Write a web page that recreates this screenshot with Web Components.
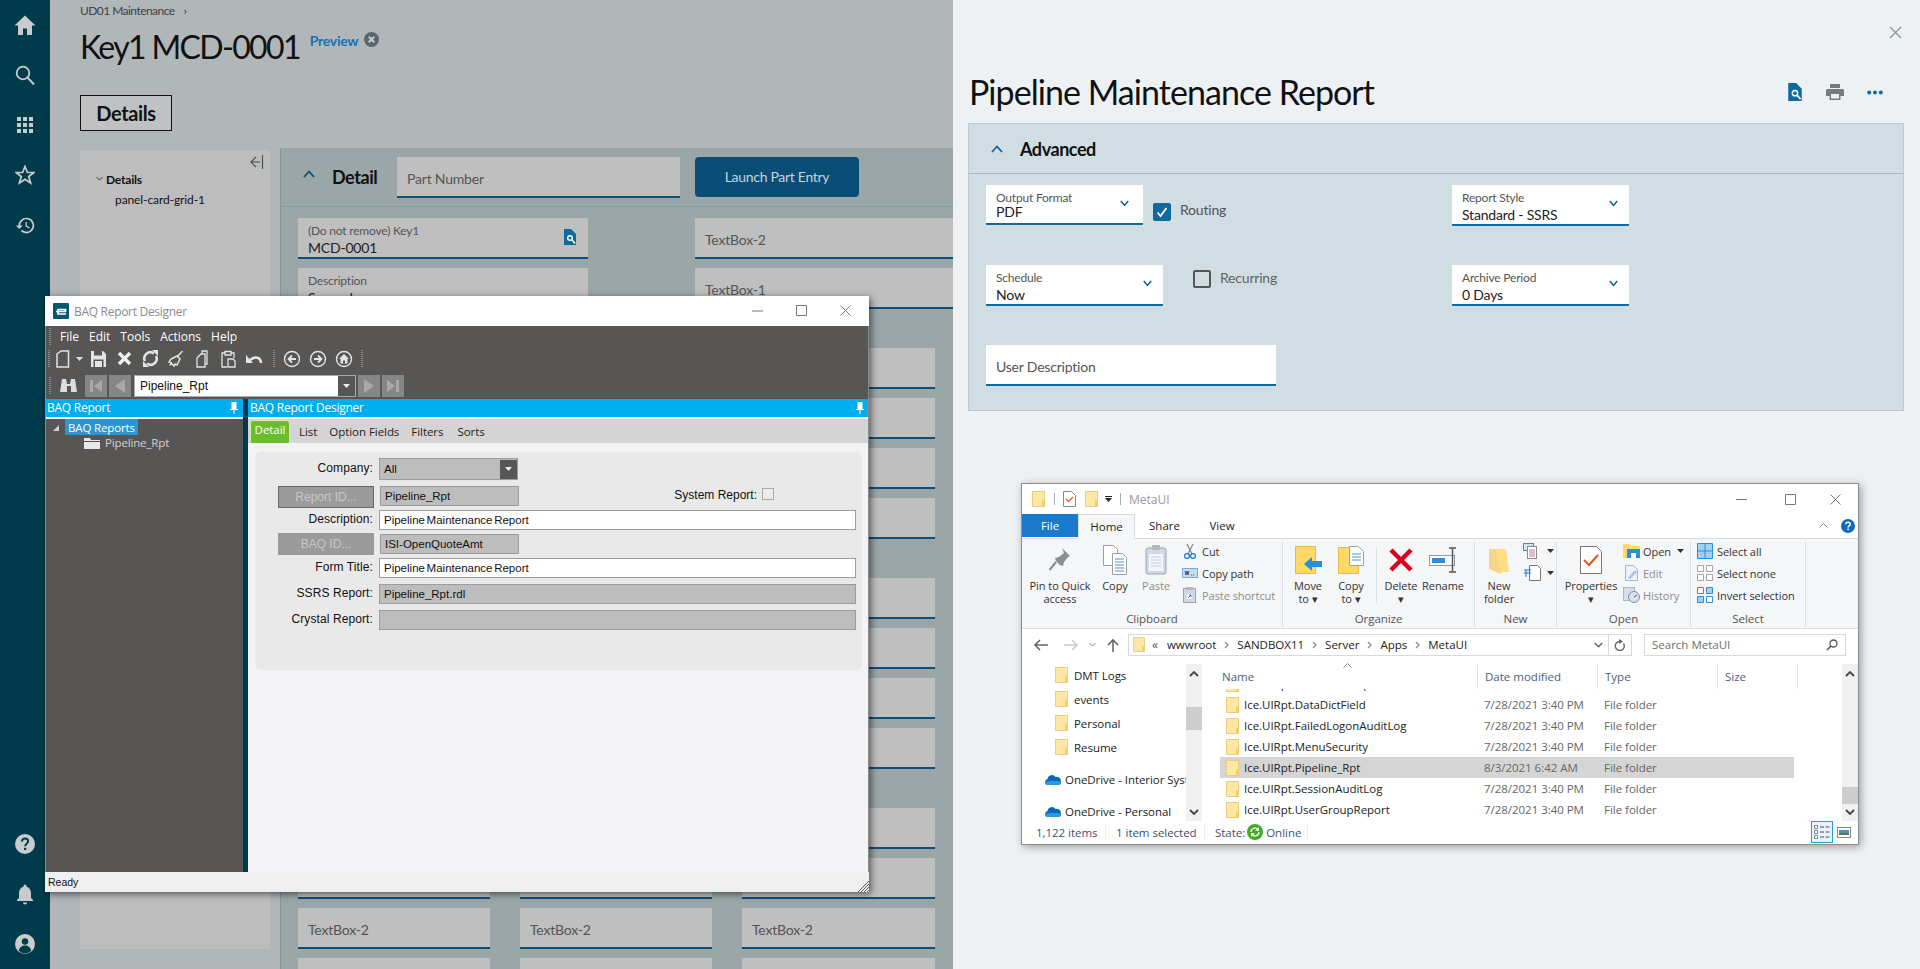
<![CDATA[<!DOCTYPE html>
<html><head><meta charset="utf-8"><title>Report</title>
<style>
html,body{margin:0;padding:0;height:969px;overflow:hidden;background:#edf1f4;font-family:"Lato","Liberation Sans",sans-serif}
</style></head><body>
<app-desktop></app-desktop>
<script>
const C=(name,css,html)=>customElements.define(name,class extends HTMLElement{
  connectedCallback(){ if(this.shadowRoot) return;
    const a=k=>this.getAttribute(k)||'';
    this.attachShadow({mode:'open'}).innerHTML='<style>'+css+'</style>'+(typeof html==='function'?html(a):html);
  }
});
const svg=(w,h,vb,body,extra='')=>`<svg width="${w}" height="${h}" viewBox="${vb}" ${extra}>${body}</svg>`;
const docSearch=`<path d="M1 0h7l5 5v11H1z" fill="#0d6a9e"/><circle cx="7" cy="9" r="3" fill="#fff"/><circle cx="7" cy="9" r="1.6" fill="#0d6a9e"/><path d="M9 11l3 3.4" stroke="#fff" stroke-width="1.5"/>`;
const folder=(w=13,h=16)=>svg(w,h,'0 0 13 16',`<path d="M.5.5h12v15H.5z" fill="#ffe8a3" stroke="#e9cd7c"/><path d="M10 9.5h2.5v6H10z" fill="#f3cf63"/>`);

/* ---------- dimmed application behind the slide-out ---------- */
C('side-nav',`:host{display:flex;flex-direction:column;justify-content:space-between;width:50px;height:969px;background:#003b4b;flex:none}
 div{height:50px;display:flex;align-items:center;justify-content:center}svg{display:block}`,
`<section><div>${svg(24,24,'0 0 24 24','<path d="M12 2.5 1.5 12.5H5V22h5v-6.5h4V22h5v-9.5h3.5z" fill="#c8cccd"/>')}</div>
<div>${svg(22,22,'0 0 22 22','<circle cx="9" cy="9" r="6.3" fill="none" stroke="#c8cccd" stroke-width="1.8"/><path d="M13.6 13.6 20 20.5" stroke="#c8cccd" stroke-width="2"/>')}</div>
<div>${svg(16,16,'0 0 16 16','<path d="M0 0h4v4H0zM6 0h4v4H6zM12 0h4v4h-4zM0 6h4v4H0zM6 6h4v4H6zM12 6h4v4h-4zM0 12h4v4H0zM6 12h4v4H6zM12 12h4v4h-4z" fill="#c8cccd"/>')}</div>
<div>${svg(20,20,'0 0 20 20','<path d="M10 1.5l2.4 6h6.4l-5.1 4 1.9 6.5-5.6-3.8-5.6 3.8 1.9-6.5-5.1-4h6.4z" fill="none" stroke="#c8cccd" stroke-width="1.7"/>')}</div>
<div>${svg(21,21,'0 0 24 24','<path d="M13 3a9 9 0 0 0-9 9H1l3.9 3.9L9 12H6a7 7 0 1 1 2.05 4.95l-1.42 1.42A9 9 0 1 0 13 3zm-1 5v5l4.25 2.52.77-1.28L13.5 12.15V8z" fill="#c8cccd"/>')}</div></section>
<section><div>${svg(22,22,'0 0 22 22','<circle cx="11" cy="11" r="10" fill="#c8cccd"/><path d="M8 8.5C8 6.6 9.4 5.5 11.1 5.5s3 1.1 3 2.8c0 2.4-3 2.4-3 5" fill="none" stroke="#003b4b" stroke-width="2"/><rect x="10" y="14.8" width="2.2" height="2.2" fill="#003b4b"/>')}</div>
<div>${svg(20,22,'2 1 20 22','<path d="M12 22.5c1.1 0 2-.9 2-2h-4a2 2 0 0 0 2 2zm6-6.5v-5c0-3.07-1.63-5.64-4.5-6.32V4a1.5 1.5 0 0 0-3 0v.68C7.64 5.36 6 7.92 6 11v5l-2 2v1h16v-1z" fill="#c8cccd"/>')}</div>
<div>${svg(22,22,'0 0 22 22','<circle cx="11" cy="11" r="10" fill="#c8cccd"/><circle cx="11" cy="8.5" r="3.2" fill="#003b4b"/><path d="M4.8 17.5c.8-3.6 3.3-5 6.2-5s5.4 1.4 6.2 5c-1.7 1.7-3.9 3-6.2 3s-4.5-1.3-6.2-3z" fill="#003b4b"/>')}</div></section>`);

C('dim-field',`:host{display:block;height:41px;background:#bfbfbf;border-bottom:2px solid #0d4f78;box-sizing:border-box;padding-left:10px;position:relative;overflow:hidden}
 .l{font-size:12px;color:#555;position:absolute;top:5px;letter-spacing:-.2px}.v{font-size:14px;color:#222;position:absolute;top:21px;letter-spacing:-.2px}
 .p{font-size:14px;color:#555;line-height:44px;letter-spacing:-.2px}svg{position:absolute;right:11px;top:10px}`,
a=>a('label')?`<div class="l">${a('label')}</div><div class="v">${a('value')}</div>${a('icon')?svg(14,18,'0 0 14 16',docSearch):''}`:`<div class="p">${a('ph')}</div>`);

C('field-group',`:host{display:grid;grid-template-columns:192px 192px 193px;column-gap:30px;row-gap:9px;margin-top:39px}`,
 a=>{const p=a('rows');let h='';for(let i=0;i<12;i++){const r=Math.floor(i/3);h+=`<dim-field ph="${p&&p[r]==='t'?'TextBox-2':''}"></dim-field>`;}return h;});

C('back-page',`:host{display:block;width:903px;flex:none;height:969px;background:#b1b6b9;overflow:hidden}
 .head{padding-left:30px}
 .crumb{height:22px;line-height:22px;font-size:12px;color:#3c4246;letter-spacing:-.55px;display:flex;gap:9px}
 .title{display:flex;margin-top:5px;height:40px;align-items:flex-start}
 h1{margin:0;font-weight:400;font-size:32px;line-height:40px;color:#111;letter-spacing:-1.65px}
 .prev{font-size:14px;font-weight:700;color:#1672b0;margin:4px 0 0 10px;line-height:20px;letter-spacing:-.3px}
 .title svg{margin:5px 0 0 6px}
 .tabbtn{margin-top:28px;width:92px;height:36px;box-sizing:border-box;border:1.5px solid #111;background:#c0c1c2;font-size:20px;font-weight:700;color:#111;display:flex;align-items:center;justify-content:center;letter-spacing:-.4px}
 .row{display:flex;margin:17px 0 0 30px;gap:10px}
 nav{width:190px;height:799px;margin-top:2px;background:#bdbdbd;position:relative;font-size:12px;color:#111;box-sizing:border-box;padding-top:22px}
 nav .collapse{position:absolute;right:6px;top:5px}
 .t1{padding-left:26px;font-weight:700;height:16px;line-height:16px;letter-spacing:-.2px;position:relative}
 .t1 svg{position:absolute;left:16px;top:4px}
 .t2{padding-left:35px;margin-top:4px;line-height:16px;letter-spacing:-.1px}
 main{width:672px;background:#9aa6a7;border-left:1px solid #869596;height:821px;overflow:hidden}
 .bar{height:59px;box-sizing:border-box;border-bottom:1px solid #7fa0a5;display:flex;align-items:flex-start;padding-left:22px}
 .bar svg{margin-top:22px}
 .bar b{font-size:18px;font-weight:700;margin:17px 0 0 17px;width:65px;color:#111;letter-spacing:-.45px;line-height:24px}
 .bar dim-field{width:283px;margin-top:9px}
 .launch{margin:9px 0 0 15px;width:164px;height:40px;padding-bottom:2px;box-sizing:border-box;border-radius:4px;background:#0a4e78;color:#c6d3db;font-size:14px;display:flex;align-items:center;justify-content:center;letter-spacing:-.3px}
 .fields{padding:11px 0 0 17px}
 .top{display:grid;grid-template-columns:290px 290px;column-gap:107px;row-gap:9px}`,
`<div class="head"><div class="crumb"><span>UD01 Maintenance</span><span>›</span></div>
 <div class="title"><h1>Key1 MCD-0001</h1><span class="prev">Preview</span>${svg(15,15,'0 0 15 15','<circle cx="7.5" cy="7.5" r="7.5" fill="#57666d"/><path d="M4.8 4.8l5.4 5.4M10.2 4.8l-5.4 5.4" stroke="#c8cccd" stroke-width="2"/>')}</div>
 <div class="tabbtn">Details</div></div>
 <div class="row"><nav><span class="collapse">${svg(15,14,'0 0 15 14','<path d="M7 2 2 7l5 5M2 7h9M13.5 0v14" fill="none" stroke="#4a5256" stroke-width="1.2"/>')}</span>
  <div class="t1">${svg(7,6,'0 0 7 6','<path d="M.5 1l3 3 3-3" fill="none" stroke="#333"/>')}Details</div><div class="t2">panel-card-grid-1</div></nav>
 <main><div class="bar">${svg(12,8,'0 0 12 8','<path d="M1 7l5-5.5L11 7" fill="none" stroke="#0b4f78" stroke-width="1.8"/>')}<b>Detail</b><dim-field ph="Part Number"></dim-field><div class="launch">Launch Part Entry</div></div>
 <div class="fields"><div class="top"><dim-field label="(Do not remove) Key1" value="MCD-0001" icon="1"></dim-field><dim-field ph="TextBox-2"></dim-field><dim-field label="Description" value="Some desc"></dim-field><dim-field ph="TextBox-1"></dim-field></div>
 <field-group></field-group><field-group></field-group><field-group rows="..t."></field-group>
 </div></main></div>`);

/* ---------- report slide-out ---------- */
C('rep-select',`:host{display:block;background:#fff;border-bottom:2px solid #0d6a9e;box-sizing:border-box;height:41px;position:relative;border-radius:1px}
 .l{position:absolute;left:10px;top:5px;font-size:12px;color:#555;letter-spacing:-.2px}
 .v{position:absolute;left:10px;font-size:14px;color:#222;letter-spacing:-.2px}
 svg{position:absolute;top:15px}`,
 a=>`<div class="l">${a('label')}</div><div class="v" style="top:${a('vt')||'21'}px">${a('value')}</div>${svg(9,7,'0 0 9 7','<path d="M.8 1l3.7 4.4L8.2 1" fill="none" stroke="#0d5f8e" stroke-width="1.5"/>',`style="right:${a('cr')||'11'}px"`)}`);

C('report-panel',`:host{display:block;flex:1;height:969px;background:#edf1f4;position:relative}
 .close{height:69px;display:flex;justify-content:flex-end;padding:26px 18px 0 0;box-sizing:border-box}
 .hd{height:46px;margin-left:16px;display:flex;align-items:center;justify-content:space-between;padding-right:37px}
 h1{margin:0;font-weight:400;font-size:34px;color:#111;letter-spacing:-.95px;line-height:46px}
 .ic{display:flex;align-items:center;gap:23px;margin-top:0}
 .card{margin:8px 0 0 15px;width:936px;height:288px;box-sizing:border-box;background:#d0dde2;border:1px solid #bdcbd0}
 .ch{height:49px;border-bottom:1px solid #9dbcc4;display:flex;align-items:center;padding-left:22px;box-sizing:content-box}
 .ch b{font-size:18px;font-weight:700;margin-left:17px;color:#111;letter-spacing:-.45px}
 .bd{padding:11px 0 0 17px;display:grid;grid-template-rows:41px 41px 41px;row-gap:39px}
 .r{display:flex;align-items:flex-start}
 .cb{width:18px;height:18px;border-radius:2px;box-sizing:border-box;flex:none}
 .on{background:#0d6a9e;display:flex;align-items:center;justify-content:center}
 .off{border:2px solid #555}
 .t{font-size:14px;color:#555;letter-spacing:-.2px}`,
`<div class="close">${svg(13,13,'0 0 13 13','<path d="M1 1l11 11M12 1 1 12" stroke="#87949a" stroke-width="1.2"/>')}</div>
<div class="hd"><h1>Pipeline Maintenance Report</h1><div class="ic">${svg(16,18,'0 0 14 16',docSearch)}${svg(18,16,'0 0 18 16','<path d="M4 0h10v4H4zM1.5 5h15A1.5 1.5 0 0 1 18 6.5V12h-3.5v4h-11v-4H0V6.500A1.500 1.500 0 0 1 1.500 5z" fill="#747c80"/><path d="M5 10h8v4.500H5z" fill="#edf1f4"/>')}${svg(16,5,'0 0 16 5','<circle cx="2.200" cy="2.500" r="2" fill="#0d6a9e"/><circle cx="8" cy="2.500" r="2" fill="#0d6a9e"/><circle cx="13.800" cy="2.500" r="2" fill="#0d6a9e"/>')}</div></div>
<div class="card"><div class="ch">${svg(12,8,'0 0 12 8','<path d="M1 7l5-5.500L11 7" fill="none" stroke="#0d5f8e" stroke-width="1.700"/>')}<b>Advanced</b></div>
 <div class="bd">
 <div class="r" style="position:relative"><rep-select label="Output Format" value="PDF" vt="18" cr="14" style="width:157px;height:40px"></rep-select>
   <div class="cb on" style="margin:18px 9px 0 10px">${svg(12,11,'0 0 12 11','<path d="M1.500 5.500l3 3.500 6-8" fill="none" stroke="#fff" stroke-width="1.800"/>')}</div><span class="t" style="margin-top:16px">Routing</span>
   <rep-select label="Report Style" value="Standard - SSRS" style="width:177px;position:absolute;left:466px"></rep-select></div>
 <div class="r" style="position:relative"><rep-select label="Schedule" value="Now" style="width:177px"></rep-select>
   <div class="cb off" style="margin:5px 9px 0 30px"></div><span class="t" style="margin-top:4px;color:#5d6568">Recurring</span>
   <rep-select label="Archive Period" value="0 Days" style="width:177px;position:absolute;left:466px"></rep-select></div>
 <div class="r"><div style="width:290px;height:41px;box-sizing:border-box;background:#fff;border-bottom:2px solid #0d6a9e;padding-left:10px;line-height:44px;font-size:14px;color:#555;letter-spacing:-.2px">User Description</div></div>
 </div></div>`);

/* ---------- BAQ Report Designer window ---------- */
const W='#e4e4e4';
const tIcons={
 doc:`<path d="M2 4 6 1h7.500v16H2z" fill="none" stroke="${W}" stroke-width="1.500"/>`,
 save:`<path d="M1 1h12l3 3v13H1z" fill="${W}"/><path d="M4 1h8v4.500H4zM3.500 9.500h10V17h-10z" fill="#575654"/><path d="M5 11h7v6H5z" fill="${W}"/>`,
 x:`<path d="M3 3l11 11M14 3 3 14" stroke="#f0f0f0" stroke-width="3.400"/>`,
 sync:`<path d="M3 11A6 6 0 0 1 12 3.500M14 6a6 6 0 0 1-9 7.500" fill="none" stroke="${W}" stroke-width="2.600"/><path d="M10 0h6v6zM7 17H1v-6z" fill="${W}"/>`,
 broom:`<path d="M9 7 14.500 1M3 9l6-3 3 3-3 6-2-1-1 2-2-2-1.500.5.800-1.800L1 12z" fill="none" stroke="${W}" stroke-width="1.500"/>`,
 copy:`<path d="M8 4V1h5v13h-2M3 8l4-4h4v13H3z" fill="none" stroke="${W}" stroke-width="1.300"/>`,
 paste:`<path d="M5 3H2v14h5M11 3h3v5M5 1.500h6V5H5zM8 9h5l2 2v6H8z" fill="none" stroke="${W}" stroke-width="1.300"/>`,
 undo:`<path d="M15 13c0-4.500-4-7-8.500-4.500L4 10" fill="none" stroke="${W}" stroke-width="2.600"/><path d="M0 5v8h7z" fill="${W}"/>`,
 back:`<circle cx="9" cy="9" r="7.500" fill="none" stroke="${W}" stroke-width="1.400"/><path d="M13 9H6M9 5.500 5.500 9 9 12.500" fill="none" stroke="${W}" stroke-width="1.800"/>`,
 fwd:`<circle cx="9" cy="9" r="7.500" fill="none" stroke="${W}" stroke-width="1.400"/><path d="M5 9h7M9 5.500 12.500 9 9 12.500" fill="none" stroke="${W}" stroke-width="1.800"/>`,
 home:`<circle cx="9" cy="9" r="7.500" fill="none" stroke="${W}" stroke-width="1.400"/><path d="M9 4 4 9h1.500v4.500h7V9H14z" fill="${W}"/><path d="M8 10.500h2v3H8z" fill="#575654"/>`
};
const ti=(k,w=26)=>`<span style="width:${w}px;display:flex;justify-content:center;align-items:center;flex:none">${svg(18,18,'0 0 18 18',tIcons[k])}</span>`;
const grip=(w=10)=>`<span style="width:${w}px;flex:none;display:flex;justify-content:center"><i style="display:block;width:2px;height:18px;background:repeating-linear-gradient(#8b8a88 0 1px,transparent 1px 2px)"></i></span>`;
const navb=(d)=>`<span class="nb">${svg(22,22,'0 0 22 22',d)}</span>`;
C('baq-row',`:host{display:flex;align-items:center;font:12px "Liberation Sans",sans-serif;color:#111}
 .lab{width:118px;text-align:right;padding:0 1px 2px 0;flex:none;letter-spacing:.1px;box-sizing:content-box}
 .b{width:96px;height:22px;margin:0 0 0 23px;flex:none;background:#9b9b9b;color:#c7c7c7;display:flex;align-items:center;justify-content:center;box-sizing:border-box;font-size:12px}
 .bd{border:1px solid #666}
 .f{margin-left:6px;height:20px;box-sizing:border-box;border:1px solid #9c9c9c;background:#bdbdbd;font-size:11.500px;line-height:18px;padding-left:4px;white-space:nowrap;word-spacing:-1.500px}
 .lab+.f{margin-left:5px}
 .w{background:#fff}.sm{width:139px;flex:none}.lg{width:477px;flex:none}
 .combo{height:22px;border-width:1.500px;display:flex;justify-content:space-between;align-items:center;padding-right:0;position:relative}
 .dd{width:17px;height:19px;background:#575654;display:flex;align-items:center;justify-content:center}
 .up{margin-top:-2px}
 .sys{width:83px;margin-left:155px;text-align:right;flex:none;margin-top:-5px}.ck{width:12px;height:12px;margin:-6px 0 0 5px;border:1px solid #aaa;background:#ececec;box-sizing:border-box}`,
 a=>{
  const lab=a('btn')?`<div class="b ${a('btn')==='d'?'bd':''}">${a('label')}</div>`:`<div class="lab">${a('label')}</div>`;
  const kind=a('kind');
  let f=`<div class="f ${a('w')?'w':''} ${kind==='lg'?'lg':'sm'} ${a('sys')?'up':''}">${a('value')}</div>`;
  if(kind==='combo') f=`<div class="f sm combo"><span>${a('value')}</span><span class="dd">${svg(7,4,'0 0 7 4','<path d="M0 0h7L3.500 4z" fill="#eee"/>')}</span></div>`;
  return lab+f+(a('sys')?`<div class="sys">System Report:</div><div class="ck"></div>`:'');
 });
C('baq-window',`:host{position:absolute;left:45px;top:296px;width:824px;height:596px;display:flex;flex-direction:column;background:#f3f3f5;box-shadow:2px 2px 7px rgba(0,0,0,.55);outline:1px solid #8b8b8b;outline-offset:-1px;font:11.500px "Open Sans",sans-serif;color:#111}
 .tb{height:30px;background:#fff;display:flex;align-items:center;position:relative;flex:none;padding-left:8px}
 .logo{width:16px;height:16px;background:#06596a;border-radius:1px;display:flex;align-items:center;justify-content:center;margin-right:5px}
 .tb .tt{font-size:12px;color:#8a8a8a;letter-spacing:-.3px}
 .wc{margin-left:auto;display:flex;gap:31px;padding:0 17px 2px 0;align-items:center}
 .dark{height:73px;background:#575654;flex:none;color:#fff}
 .menu{height:21px;display:flex;align-items:center;font-size:12px;padding-left:0}
 .menu span.m{padding:0;margin-right:10px}
 .tools{height:24px;display:flex;align-items:center;padding-left:0}
 .nav{height:28px;display:flex;align-items:center;padding-top:1px;box-sizing:border-box}
 .nb{width:22px;height:22px;background:#868686;display:block;margin-right:2px;flex:none}.nb svg{display:block}
 .cbx{width:222px;height:22px;box-sizing:border-box;background:#fff;border:1px solid #aaa;display:flex;justify-content:space-between;font-size:12px;line-height:20px;padding-left:5px;margin:0 2px 0 1px;color:#111;font-family:"Liberation Sans",sans-serif;flex:none}
 .cbx i{width:17px;background:#575654;display:flex;align-items:center;justify-content:center}
 .panes{flex:1;display:grid;grid-template-columns:198px 5px 1fr;min-height:0}
 .hdr{height:18px;background:#00aeef;color:#fff;font-size:12px;line-height:18px;padding-left:2px;display:flex;justify-content:space-between;border-bottom:2px solid #f3f3f5;letter-spacing:-.25px;box-sizing:content-box}
 .hdr svg{margin:3px 5px 0 0}
 .l{background:#575654;overflow:hidden;color:#d4d4d4}
 .tree{position:relative;height:100%;font-size:11.500px}
 .sel{display:inline-flex;height:16px;align-items:center;background:#2c95d2;color:#fff;padding:0 3px;margin:0 0 0 20px;letter-spacing:-.15px;vertical-align:top}
 .ch{display:flex;align-items:center;margin:0 0 0 39px;gap:5px;letter-spacing:-.15px}
 .tri{position:absolute;left:7px;top:5px}
 .sp{background:#013a4d}
 .r{display:flex;flex-direction:column;min-width:0}
 .tabs{height:24px;background:#d4d4d4;display:flex;align-items:flex-end;flex:none;padding-left:2px}
 .tabs span{margin-left:12px;height:22px;line-height:21px;font-size:11.500px;letter-spacing:-.05px;color:#222}
 .tabs .act{margin:0;width:40px;height:23px;background:#6cbd2c;color:#fff;text-align:center;line-height:18px;border:1px solid #d4ecb8;border-bottom:0;box-sizing:border-box;border-radius:3px 3px 0 0}
 .tabs .act+span{margin-left:9px}
 .grp{margin:9px 7px 0 7px;height:218px;background:#e9e9e9;border-radius:6px;padding-top:6px;box-sizing:border-box}
 .st{height:20px;background:#efefef;flex:none;font:10.500px/20px "Liberation Sans",sans-serif;padding-left:3px;position:relative}
 .st svg{position:absolute;right:0;bottom:0}`,
`<div class="tb"><span class="logo">${svg(12,9,'0 0 12 9','<path d="M1 4.500H10.500V2.500H3V7h8" fill="none" stroke="#fff" stroke-width="1.700"/>')}</span><span class="tt">BAQ Report Designer</span>
 <div class="wc">${svg(13,13,'0 0 13 13','<path d="M1 7h11" stroke="#777"/>')}${svg(13,13,'0 0 13 13','<path d="M1.500 1.500h10v10h-10z" fill="none" stroke="#777"/>')}${svg(13,13,'0 0 13 13','<path d="M1.500 1.500l10 10M11.500 1.500l-10 10" stroke="#777"/>')}</div></div>
<div class="dark"><div class="menu">${grip(10)}<span style="width:5px"></span><span class="m">File</span><span class="m">Edit</span><span class="m">Tools</span><span class="m" >Actions</span><span class="m">Help</span></div>
 <div class="tools">${grip(7)}${ti('doc',24)}<span style="width:10px;flex:none">${svg(7,4,'0 0 7 4','<path d="M0 0h7L3.500 4z" fill="#ddd"/>')}</span>${ti('save')}${ti('x')}${ti('sync')}${ti('broom')}${ti('copy')}${ti('paste')}${ti('undo')}${grip(11)}${ti('back')}${ti('fwd')}${ti('home')}${grip(10)}</div>
 <div class="nav">${grip(10)}<span style="width:26px;display:flex;justify-content:center;flex:none">${svg(17,15,'0 0 17 15','<path d="M2 1h4l1 5h3l1-5h4l2 13h-6V8H7v6H0z" fill="#ddd"/>')}</span><span style="width:4px;flex:none"></span>${navb('<path d="M5 5h3v12H5zM17 5v12L9 11z" fill="#a9a9a9"/>')}${navb('<path d="M16 4v14L6 11z" fill="#a9a9a9"/>')}
  <div class="cbx"><span>Pipeline_Rpt</span><i>${svg(7,4,'0 0 7 4','<path d="M0 0h7L3.500 4z" fill="#eee"/>')}</i></div>
  ${navb('<path d="M6 4v14l10-7z" fill="#a9a9a9"/>')}${navb('<path d="M14 5h3v12h-3zM5 5v12l8-6z" fill="#a9a9a9"/>')}</div></div>
<div class="panes">
 <div class="l"><div class="hdr"><span>BAQ Report</span>${svg(8,12,'0 0 8 12','<path d="M1.500 0h5v7H8v1H4.500v4h-1V8H0V7h1.500z" fill="#fff"/>')}</div>
  <div class="tree">${svg(8,8,'0 0 8 8','<path d="M7 1v6H1z" fill="#d0d0d0"/>','class="tri"')}<div class="sel">BAQ Reports</div><div class="ch">${svg(16,12,'0 0 16 12','<path d="M0 1h6l1 2h9v1H0zM0 5h16v7H0z" fill="#e8e8e8"/>')}<span>Pipeline_Rpt</span></div></div></div>
 <div class="sp"></div>
 <div class="r"><div class="hdr"><span>BAQ Report Designer</span>${svg(8,12,'0 0 8 12','<path d="M1.500 0h5v7H8v1H4.500v4h-1V8H0V7h1.500z" fill="#fff"/>')}</div>
  <div class="tabs"><span class="act">Detail</span><span>List</span><span>Option Fields</span><span>Filters</span><span style="margin-left:14px">Sorts</span></div>
  <div class="grp">
   <baq-row label="Company:" kind="combo" value="All" style="height:22px"></baq-row>
   <baq-row label="Report ID..." btn="d" value="Pipeline_Rpt" sys="1" style="height:22px;margin-top:6px"></baq-row>
   <baq-row label="Description:" kind="lg" w="1" value="Pipeline Maintenance Report" style="height:20px;margin-top:2px"></baq-row>
   <baq-row label="BAQ ID..." btn="n" value="ISI-OpenQuoteAmt" style="height:22px;margin-top:3px"></baq-row>
   <baq-row label="Form Title:" kind="lg" w="1" value="Pipeline Maintenance Report" style="height:20px;margin-top:3px"></baq-row>
   <baq-row label="SSRS Report:" kind="lg" value="Pipeline_Rpt.rdl" style="height:20px;margin-top:6px"></baq-row>
   <baq-row label="Crystal Report:" kind="lg" value="" style="height:20px;margin-top:6px"></baq-row>
  </div></div>
</div>
<div class="st">Ready${svg(12,12,'0 0 12 12','<path d="M12 1 1 12M12 4 4 12M12 7 7 12M12 10l-2 2" stroke="#555"/>')}</div>`);

/* ---------- Explorer window ---------- */
C('rb-big',`:host{display:flex;flex-direction:column;align-items:center;flex:none;font-size:11px;line-height:13px;text-align:center;color:#333;letter-spacing:-.05px}
 .i{height:36px;display:flex;align-items:center;justify-content:center;margin-bottom:1px}.g{color:#8c8c8c}`,
 a=>`<div class="i"><slot></slot></div><div class="${a('dim')?'g':''}">${a('t1')}${a('t2')?'<br>'+a('t2'):''}</div>`);
C('rb-small',`:host{display:flex;align-items:center;height:22px;font-size:11px;white-space:nowrap;color:#333;letter-spacing:-.05px}
 .ic{width:var(--ic,19px);display:flex;justify-content:center;flex:none}.d{color:#8c8c8c}.ar{margin-left:6px;display:flex}`,
 a=>`<span class="ic"><slot></slot></span><span class="${a('dim')?'d':''}" style="margin-left:${a('ml')||3}px">${a('t')}</span>${a('arrow')?`<span class="ar">${svg(7,4,'0 0 7 4','<path d="M0 0h7L3.500 4z" fill="#333"/>')}</span>`:''}`);
C('rb-group',`:host{display:flex;flex-direction:column;flex:none;height:85px;margin-top:3px;border-right:1px solid #dcdfe2;box-sizing:border-box;position:relative}
 .c{flex:1;display:flex;align-items:flex-start;padding-top:0;min-height:0}
 .n{height:16px;line-height:15px;text-align:center;font-size:11.500px;color:#555;letter-spacing:-.05px}`,
 a=>`<div class="c"><slot></slot></div><div class="n">${a('name')}</div>`);
C('file-row',`:host{display:grid;grid-template-columns:24px 240px 120px 1fr;height:21px;align-items:center;font-size:11.500px;width:574px;color:#222;letter-spacing:-.03px}
 :host([sel]){background:#d5d5d5}.ic{padding-left:6px;display:flex}.d,.t{color:#666}`,
 a=>`<span class="ic">${folder()}</span><span>${a('n')}</span><span class="d">${a('d')}</span><span class="t">File folder</span>`);
C('nav-item',`:host{display:flex;align-items:center;height:24px;font-size:11.500px;color:#222;white-space:nowrap;letter-spacing:-.05px}`,
 a=>a('cloud')?`<span style="margin:0 4px 0 23px;display:flex">${svg(16,11,'0 0 16 11','<path d="M3 11a3 3 0 0 1-.6-5.900A4.500 4.500 0 0 1 10.500 3 3.500 3.500 0 0 1 13 11z" fill="#0f67b8"/><path d="M3 11c-1 0-3 0-3-1.500S2 7 6 7s9 0 10 1.500S15 11 13 11z" fill="#2b9ae0"/>')}</span>${a('n')}`:`<span style="margin:0 6px 0 33px;display:flex">${folder()}</span>${a('n')}`);
const scroll=(thumbTop,thumbH)=>`<div style="width:16px;height:157px;background:#f0f0f0;position:relative;flex:none">${svg(10,7,'0 0 10 7','<path d="M1 6l4-4 4 4" fill="none" stroke="#444" stroke-width="1.800"/>','style="position:absolute;left:3px;top:6px"')}<div style="position:absolute;left:0;right:0;top:${thumbTop}px;height:${thumbH}px;background:#cdcdcd"></div>${svg(10,7,'0 0 10 7','<path d="M1 1l4 4 4-4" fill="none" stroke="#444" stroke-width="1.800"/>','style="position:absolute;left:3px;bottom:5px"')}</div>`;
const chev=`<span style="margin:0 8px;display:inline-block;width:5px">${svg(5,8,'0 0 5 8','<path d="M1 1l3 3-3 3" fill="none" stroke="#888" stroke-width="1.200"/>')}</span>`;
const dn=svg(7,4,'0 0 7 4','<path d="M0 0h7L3.500 4z" fill="#333"/>');
C('explorer-window',`:host{position:absolute;left:1021px;top:483px;width:838px;height:362px;box-sizing:border-box;background:#fff;border:1px solid #8e8e8e;box-shadow:2px 2px 8px rgba(0,0,0,.35);font-family:"Open Sans",sans-serif;display:flex;flex-direction:column;overflow:visible}
 .title{height:30px;display:flex;align-items:center;flex:none;padding-left:10px;font-size:12px;color:#9a9a9a}
 .title .sep{width:1px;height:12px;background:#aaa;margin:0 10px}
 .wc{margin-left:auto;display:flex;gap:34px;align-items:center;padding-right:17px}
 .tabs{height:24px;display:flex;flex:none;font-size:11.500px;align-items:stretch;position:relative;color:#222;padding-bottom:1px;box-sizing:border-box}
 .tabs .f{width:56px;background:#1979ca;color:#fff;display:flex;align-items:center;justify-content:center}
 .tabs .h{width:57px;border:1px solid #dadbdc;border-bottom:0;box-sizing:border-box;display:flex;align-items:center;justify-content:center;background:#f5f6f7;margin-bottom:-2px;padding-bottom:2px;position:relative;z-index:1}
 .tabs .o{display:flex;align-items:center;justify-content:center}
 .tabs .ri{margin-left:auto;display:flex;align-items:center;gap:13px;padding-right:3px}
 .rb{height:91px;background:#f5f6f7;border-top:1px solid #dadbdc;border-bottom:1px solid #dadbdc;box-sizing:border-box;display:flex;flex:none}
 .col{display:flex;flex-direction:column;margin-top:-2px}
 .vs{width:1px;height:55px;background:#dcdfe2;margin:6px 0 0}
 .addr{height:31px;display:flex;align-items:center;flex:none;position:relative;font-size:11.500px;color:#222}
 .ab{width:504px;height:22px;box-sizing:border-box;border:1px solid #d9d9d9;display:flex;align-items:center;padding-left:4px;margin-left:0;white-space:nowrap}
 .sb{width:202px;height:22px;box-sizing:border-box;border:1px solid #d9d9d9;margin-left:12px;display:flex;align-items:center;justify-content:space-between;padding:0 7px;color:#6d6d6d}
 .body{flex:1;display:flex;min-height:0;padding-top:4px}
 .navp{width:164px;flex:none;overflow:hidden;margin-top:-1px}
 .list{flex:1;position:relative;min-width:0;margin-left:17px}
 .hdrs{height:25px;display:grid;grid-template-columns:259px 120px 120px 80px;font-size:11.500px;color:#4c607a;align-items:center;position:relative}
 .hdrs span{padding-left:7px;height:100%;display:flex;align-items:center;border-right:1px solid #e5e5e5;box-sizing:border-box}
 .rows{height:134px;overflow:hidden}.in{margin:-16px 0 0 1px}
 .status{height:22px;flex:none;display:flex;align-items:center;font-size:11.500px;color:#3c5070;position:relative;letter-spacing:-.03px;padding-bottom:2px;box-sizing:border-box}
 .status i{display:block;width:1px;height:16px;background:#eee}
 .vw{margin-left:auto;display:flex;align-items:center;height:100%;padding-right:7px}`,
`<div class="title">${folder(13,16)}<span class="sep" style="margin:0 8px 0 9px"></span>${svg(13,16,'0 0 13 16','<path d="M.5.5h8l4 4v11H.5z" fill="#fff" stroke="#888"/><path d="M3 8l2.500 2.500L10 6" fill="none" stroke="#e8541c" stroke-width="1.200"/>')}<span style="width:9px"></span>${folder(13,16)}<span style="width:7px"></span>${svg(7,6,'0 0 7 6','<path d="M0 0h7v1H0zM0 2h7L3.500 6z" fill="#222"/>')}<span class="sep" style="margin:0 8px"></span>MetaUI
 <div class="wc">${svg(11,11,'0 0 11 11','<path d="M0 5.500h11" stroke="#777" />','style="margin-right:4px"')}${svg(11,11,'0 0 11 11','<path d="M.5.500h10v10H.5z" fill="none" stroke="#777"/>')}${svg(11,11,'0 0 11 11','<path d="M.5.500l10 10M10.500.500l-10 10" stroke="#777"/>')}</div></div>
<div class="tabs"><span class="f">File</span><span class="h">Home</span><span class="o" style="width:57px;margin-left:1px">Share</span><span class="o" style="width:56px;margin-left:1px">View</span>
 <span class="ri">${svg(9,5,'0 0 9 5','<path d="M.5 4.500l4-4 4 4" fill="none" stroke="#888"/>')}${svg(14,14,'0 0 14 14','<circle cx="7" cy="7" r="7" fill="#0f6cbd"/><path d="M4.800 5.300C4.800 4 5.800 3.200 7 3.200S9.200 4 9.200 5.200C9.200 6.800 7.100 6.800 7.100 8.500" fill="none" stroke="#fff" stroke-width="1.500"/><rect x="6.300" y="9.600" width="1.600" height="1.600" fill="#fff"/>')}</span></div>
<div class="rb">
 <rb-group name="Clipboard" style="width:261px"><rb-big t1="Pin to Quick" t2="access" style="width:76px;margin-left:0">${svg(24,26,'0 0 24 26','<path d="M14 1l8 8-2 1-4 5-1 4-3-1-4-4-1-3 4-1 5-4z" fill="#888e94"/><path d="M8 15 1.500 23" stroke="#888e94" stroke-width="2"/>')}</rb-big>
  <rb-big t1="Copy" style="width:36px;margin-left:-1px">${svg(25,30,'0 0 25 30','<path d="M.5.500h10l4 4v16H.5z" fill="#fff" stroke="#9aa0a6"/><path d="M9.500 8.500h10l4 4v17h-14z" fill="#fff" stroke="#9aa0a6"/><path d="M12 14h9M12 17h9M12 20h9M12 23h9M12 26h9" stroke="#5b8fd6"/>')}</rb-big>
  <rb-big t1="Paste" dim="1" style="width:46px">${svg(22,30,'0 0 22 30','<rect x="1" y="3" width="20" height="26" rx="2" fill="#cfd8e6" stroke="#9aa4b0"/><rect x="7" y="0" width="8" height="5" rx="1" fill="#b5b9bd"/><path d="M4 9h14v17H4z" fill="#f2f5fb"/><path d="M6 12h10M6 15h10M6 18h10M6 21h10" stroke="#c4cde0"/>')}</rb-big>
  <div class="col" style="--ic:19px;margin-left:1px"><rb-small t="Cut">${svg(12,16,'0 0 12 16','<path d="M3 1l5 10M9 1 4 11" stroke="#7d8690" stroke-width="1.200"/><circle cx="3" cy="13" r="2.400" fill="none" stroke="#1c74c9" stroke-width="1.200"/><circle cx="9" cy="13" r="2.400" fill="none" stroke="#1c74c9" stroke-width="1.200"/>')}</rb-small><rb-small t="Copy path">${svg(16,10,'0 0 16 10','<rect x=".5" y=".5" width="15" height="9" fill="#c4dcf5" stroke="#7fa8d2"/><path d="M3 3l1 4 1-4 1 4 1-4M9 7h1M11 7h1" stroke="#333" stroke-width=".8" fill="none"/>')}</rb-small><rb-small t="Paste shortcut" dim="1">${svg(13,16,'0 0 13 16','<rect x=".5" y="1.500" width="12" height="14" fill="#cfd8e6" stroke="#9aa4b0"/><rect x="3" y="0" width="7" height="3" fill="#b5b9bd"/><path d="M4 7h5v5H4z" fill="#fff"/><path d="M5 11l3-3M6 8h2v2" stroke="#4e6e9e" fill="none"/>')}</rb-small></div>
 </rb-group>
 <rb-group name="Organize" style="width:192px"><div style="display:flex;width:100%"><rb-big t1="Move" t2="to ▾" style="width:46px;margin-left:2px">${svg(27,28,'0 0 27 28','<path d="M.5.500h20v27H.5z" fill="#ffd968" stroke="#e6bb48"/><path d="M27 15H17v-4l-8 7 8 7v-4h10z" fill="#2a8ede"/>')}</rb-big>
  <rb-big t1="Copy" t2="to ▾" style="width:40px">${svg(27,28,'0 0 27 28','<path d="M.5 1.500h20v26H.5z" fill="#ffd968" stroke="#e6bb48"/><path d="M11.500.500h9l5 5v14h-14z" fill="#fff" stroke="#9aa0a6"/><path d="M14 8h9M14 11h9M14 14h9" stroke="#5b8fd6"/>')}</rb-big>
  <div class="vs" style="margin-left:5px;margin-right:1px"></div>
  <rb-big t1="Delete" t2="▾" style="width:46px">${svg(26,26,'0 0 26 26','<path d="M3 3l20 20M23 3 3 23" stroke="#d9001b" stroke-width="4.500"/>')}</rb-big>
  <rb-big t1="Rename" style="width:38px;margin-left:0">${svg(28,26,'0 0 28 26','<rect x=".5" y="8.500" width="25" height="10" fill="#fff" stroke="#8d99a6"/><rect x="3" y="11" width="13" height="5" fill="#2a8ede"/><path d="M20 1h7M23.500 1v24M20 25h7" stroke="#555" stroke-width="1.500" fill="none"/>')}</rb-big></div></rb-group>
 <rb-group name="New" style="width:82px"><div style="display:flex"><rb-big t1="New" t2="folder" style="width:48px">${svg(20,27,'0 0 20 27','<path d="M0 2l12 0 0 25-12-5z" fill="#f6d68a"/><path d="M7 2h10l3 23H12z" fill="#ffdf7f"/>')}</rb-big>
  <div class="col" style="padding-left:0"><div style="height:22px;display:flex;align-items:center;gap:2px">${svg(22,16,'0 0 22 16','<rect x=".5" y=".5" width="10" height="7" fill="#cfe4f7" stroke="#5a86b0"/><rect x="4.500" y="3.500" width="9" height="12" fill="#fff" stroke="#888"/><path d="M6 7h6M6 9h6M6 11h6M6 13h6" stroke="#bb7799"/>')}${dn}</div><div style="height:22px;display:flex;align-items:center;gap:2px">${svg(22,16,'0 0 22 16','<path d="M6.500.500h8l3 3v12h-11z" fill="#fff" stroke="#777"/><path d="M1 5h7M1 8h7M3 5v7" stroke="#1c74c9"/>')}${dn}</div></div></div></rb-group>
 <rb-group name="Open" style="width:134px"><div style="display:flex"><rb-big t1="Properties" t2="▾" style="width:62px;margin-left:3px">${svg(22,28,'0 0 22 28','<path d="M.5.500h16l5 5v22H.500z" fill="#fff" stroke="#777"/><path d="M4 14l5 5 9-10" fill="none" stroke="#e8541c" stroke-width="2"/>')}</rb-big>
  <div class="col" style="margin-left:0"><rb-small t="Open" ml="2" arrow="1">${svg(17,14,'0 0 17 14','<path d="M0 0h6l2 2h9v12H0z" fill="#ffd968"/><path d="M4 5h13v9H4z" fill="#2a8ede"/><path d="M8 9h5v5H8z" fill="#fff"/>')}</rb-small><rb-small t="Edit" dim="1" ml="2">${svg(14,16,'0 0 14 16','<path d="M.5.500h8l4 4v11H.5z" fill="#eef2f8" stroke="#aeb7c4"/><path d="M3 13l7-8 2 2-7 7z" fill="#9fc1ec"/>')}</rb-small><rb-small t="History" dim="1" ml="2">${svg(17,16,'0 0 17 16','<rect x=".5" y=".5" width="11" height="13" fill="#d8dee8" stroke="#aeb7c4"/><circle cx="11" cy="10" r="5.500" fill="#d8e2ee" stroke="#7a8ea5"/><path d="M11 10l3-2" stroke="#556"/>')}</rb-small></div>
  </div></rb-group>
 <rb-group name="Select" style="width:115px"><div class="col" style="margin-left:5px;--ic:18px"><rb-small t="Select all">${svg(16,16,'0 0 16 16','<path d="M.5.500h15v15H.5z" fill="#9fd0f5" stroke="#2a8ede"/><path d="M8 0v16M0 8h16" stroke="#2a8ede"/>')}</rb-small><rb-small t="Select none">${svg(16,16,'0 0 16 16','<path d="M.5.500h6v6h-6zM9.500.500h6v6h-6zM.5 9.500h6v6h-6zM9.500 9.500h6v6h-6z" fill="#fff" stroke="#a5a5a5"/>')}</rb-small><rb-small t="Invert selection">${svg(16,16,'0 0 16 16','<path d="M.5.500h6v6h-6zM9.500 9.500h6v6h-6z" fill="#fff" stroke="#2a8ede"/><path d="M9.500.500h6v6h-6zM.5 9.500h6v6h-6z" fill="#9fd0f5" stroke="#2a8ede"/>')}</rb-small></div></rb-group>
</div>
<div class="addr"><span style="width:11px"></span>${svg(16,12,'0 0 16 12','<path d="M15 6H2M7 1 2 6l5 5" fill="none" stroke="#666" stroke-width="1.600"/>')}<span style="width:14px"></span>${svg(16,12,'0 0 16 12','<path d="M1 6h13M9 1l5 5-5 5" fill="none" stroke="#ccc" stroke-width="1.600"/>')}<span style="width:10px"></span>${svg(7,5,'0 0 7 5','<path d="M.5 1l3 3 3-3" fill="none" stroke="#888"/>')}<span style="width:11px"></span>${svg(12,14,'0 0 12 14','<path d="M6 14V2M1 7l5-5 5 5" fill="none" stroke="#666" stroke-width="1.600"/>')}<span style="width:9px"></span>
 <div class="ab">${folder(12,15)}<span style="margin:0 9px 0 7px;color:#555;font-size:12px">«</span>wwwroot${chev}SANDBOX11${chev}Server${chev}Apps${chev}MetaUI<span style="margin-left:auto;display:flex;align-items:center;gap:5px;height:100%">${svg(9,6,'0 0 9 6','<path d="M.8 1l3.700 3.700L8.200 1" fill="none" stroke="#666" stroke-width="1.500"/>')}<span style="width:1px;background:#d9d9d9;height:100%"></span>${svg(11,12,'0 0 11 12','<path d="M9.500 4.500A4.500 4.500 0 1 1 6 2.500" fill="none" stroke="#666" stroke-width="1.400"/><path d="M5 0v5l4-2.500z" fill="#666"/>')}<span style="width:1px"></span></span></div>
 <div class="sb">Search MetaUI${svg(12,12,'0 0 12 12','<circle cx="7.500" cy="4.500" r="3.500" fill="none" stroke="#555" stroke-width="1.300"/><path d="M5 7 1 11" stroke="#555" stroke-width="1.600"/>')}</div></div>
<div class="body"><div class="navp"><nav-item n="DMT Logs"></nav-item><nav-item n="events"></nav-item><nav-item n="Personal"></nav-item><nav-item n="Resume"></nav-item><div style="height:8px"></div><nav-item cloud="1" n="OneDrive - Interior Systems"></nav-item><div style="height:8px"></div><nav-item cloud="1" n="OneDrive - Personal"></nav-item></div>
 ${scroll(43,23)}
 <div class="list"><div class="hdrs"><span style="border-right:1px solid #e5e5e5;padding-left:3px">Name</span><span>Date modified</span><span>Type</span><span>Size</span>${svg(9,5,'0 0 9 5','<path d="M.5 4.500l4-4 4 4" fill="none" stroke="#888"/>','style="position:absolute;left:124px;top:-1px"')}</div>
  <div class="rows"><div class="in"><file-row n="Ice.UIRpt.EmailAddrReport" d="7/28/2021 3:40 PM"></file-row><file-row n="Ice.UIRpt.DataDictField" d="7/28/2021 3:40 PM"></file-row><file-row n="Ice.UIRpt.FailedLogonAuditLog" d="7/28/2021 3:40 PM"></file-row><file-row n="Ice.UIRpt.MenuSecurity" d="7/28/2021 3:40 PM"></file-row><file-row sel n="Ice.UIRpt.Pipeline_Rpt" d="8/3/2021 6:42 AM"></file-row><file-row n="Ice.UIRpt.SessionAuditLog" d="7/28/2021 3:40 PM"></file-row><file-row n="Ice.UIRpt.UserGroupReport" d="7/28/2021 3:40 PM"></file-row></div></div></div>
 ${scroll(123,17)}
</div>
<div class="status"><span style="width:14px"></span><span style="width:69px">1,122 items</span><i></i><span style="width:10px"></span><span style="width:88px">1 item selected</span><i></i><span style="width:10px"></span><span>State:</span><span style="margin:0 3px 0 2px;display:flex">${svg(16,16,'0 0 16 16','<circle cx="8" cy="8" r="8" fill="#45a92a"/><path d="M4 8a4 4 0 0 1 7-2.500M12 8a4 4 0 0 1-7 2.500" fill="none" stroke="#e6f6da" stroke-width="1.500"/><path d="M12 3v4H8zM4 13V9h4z" fill="#e6f6da"/>')}</span><span style="width:41px">Online</span><i></i>
 <span class="vw"><span style="width:22px;height:22px;box-sizing:border-box;border:1px solid #26a0da;background:#e5f3fb;display:flex;align-items:center;justify-content:center;margin-right:4px">${svg(16,14,'0 0 16 14','<path d="M.5.500h3v3h-3zM.5 5.500h3v3h-3zM.5 10.500h3v3h-3z" fill="#fff" stroke="#888"/><path d="M6 2h4M11.500 2H15.500M6 7h4M11.500 7h4M6 12h4M11.500 12h4" stroke="#555"/>')}</span>${svg(14,11,'0 0 14 11','<rect x=".5" y=".5" width="13" height="10" fill="#fff" stroke="#888"/><rect x="2" y="3" width="10" height="4" fill="#5a8fb5"/><rect x="2" y="6" width="10" height="2" fill="#557a54"/>')}</span></div>`);

/* ---------- desktop ---------- */
C('app-desktop',`:host{display:flex;width:1920px;height:969px;position:relative;overflow:hidden}`,
 `<side-nav></side-nav><back-page></back-page><report-panel></report-panel><baq-window></baq-window><explorer-window></explorer-window>`);
</script>
</body></html>]]>
